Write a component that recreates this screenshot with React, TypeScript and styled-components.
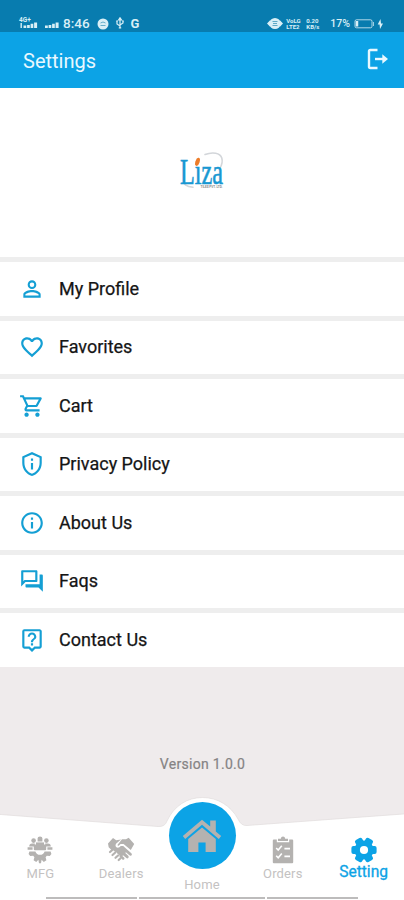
import React from "react";
import styled, { createGlobalStyle } from "styled-components";
import {
  MdPersonOutline,
  MdFavoriteBorder,
  MdOutlineShoppingCart,
  MdOutlinePrivacyTip,
  MdInfoOutline,
  MdOutlineQuestionAnswer,
  MdOutlineLiveHelp,
} from "react-icons/md";

const BLUE = "#0ca3e6";
const GREY = "#b4b2b0";

const GlobalStyle = createGlobalStyle`
  * { box-sizing: border-box; }
  body {
    margin: 0;
    background: #efebec;
    font-family: Roboto, "Liberation Sans", sans-serif;
  }
`;

const Screen = styled.div`
  width: 404px;
  height: 900px;
  overflow: hidden;
  display: flex;
  flex-direction: column;
  background: #efebec;
`;

const StatusBar = styled.div`
  height: 32px;
  flex: none;
  display: flex;
  justify-content: space-between;
  align-items: flex-start;
  padding: 15px 20px 0 18px;
  background: #087caf;
  color: #d9eff6;
`;

const StatusGroup = styled.div`
  display: flex;
  height: 17px;
  align-items: center;

  svg { flex: none; }
`;

const SignalPair = styled.div`
  display: flex;
  gap: 7px;
`;

const Notifications = styled.div`
  display: flex;
  align-items: center;
  gap: 6px;
`;

const Clock = styled.span`
  margin: 0 7px 0 3px;
  font-size: 13.5px;
  font-weight: 500;
  line-height: 17px;
`;

const StatusText = styled.span`
  margin: 0 4px 0 9px;
  font-size: 10.5px;
  font-weight: 500;
  line-height: 17px;
`;

const TinyStack = styled.span<{ $gap: number }>`
  display: flex;
  flex-direction: column;
  width: 15px;
  margin-left: ${(p) => p.$gap}px;
  font-size: 6px;
  font-weight: 700;
  line-height: 6px;
`;

const GoogleMark = styled.span`
  font-size: 13px;
  font-weight: 700;
  line-height: 17px;
`;

const Header = styled.header`
  height: 56px;
  flex: none;
  display: flex;
  align-items: center;
  justify-content: space-between;
  padding: 0 15px 0 23px;
  background: ${BLUE};
  color: #e9f8ff;

  svg { margin-bottom: 2px; }
`;

const Title = styled.h1`
  margin: 1px 0 0;
  font-size: 20px;
  font-weight: 400;
  line-height: 24px;
`;

const LogoPanel = styled.div`
  height: 169px;
  flex: none;
  display: flex;
  justify-content: center;
  padding-top: 61px;
  background: #fff;

  svg { overflow: visible; }
`;

const Menu = styled.nav`
  flex: none;
  display: flex;
  flex-direction: column;
`;

const MenuRow = styled.a`
  height: 58.5px;
  display: flex;
  align-items: center;
  gap: 14px;
  padding: 0 19px;
  border-top: 5px solid #eeeeee;
  background: #fff;
  color: #151515;
  font-size: 18px;
  line-height: 24px;

  svg {
    flex: none;
    color: #149fd4;
  }
`;

const MenuLabel = styled.span`
  -webkit-text-stroke: 0.25px currentColor;
`;

const Version = styled.p`
  margin: 88px 0 0;
  padding-left: 1px;
  text-align: center;
  color: #858384;
  font-size: 14px;
  line-height: 18px;
  letter-spacing: 0.3px;
  -webkit-text-stroke: 0.2px currentColor;
`;

const BottomBar = styled.footer`
  position: relative;
  height: 104px;
  flex: none;
  margin-top: auto;
`;

const BarShape = styled.svg`
  position: absolute;
  inset: 0;
`;

const Tabs = styled.div`
  position: relative;
  height: 104px;
  display: grid;
  grid-template-columns: repeat(5, 1fr);
`;

const Tab = styled.div<{ $kind?: "home" | "active" }>`
  display: flex;
  flex-direction: column;
  align-items: center;
  padding-top: ${(p) => (p.$kind === "home" ? 6 : 40)}px;
  color: ${(p) => (p.$kind === "active" ? BLUE : "#c4c2c2")};
  font-size: ${(p) => (p.$kind === "active" ? 15.6 : 13)}px;
  line-height: 18px;
  white-space: nowrap;

  svg { flex: none; }
`;

const TabLabel = styled.span<{ $active?: boolean }>`
  margin-top: ${(p) => (p.$active ? 0 : 1)}px;
  letter-spacing: ${(p) => (p.$active ? 0 : 0.15)}px;
  -webkit-text-stroke: ${(p) => (p.$active ? 0.3 : 0)}px currentColor;
`;

const HomeButton = styled.div`
  width: 67px;
  height: 67px;
  display: flex;
  align-items: center;
  justify-content: center;
  border-radius: 50%;
  background: ${BLUE};
  margin: 0 0 6px 1px;
`;

const GestureBar = styled.div`
  position: absolute;
  left: 46px;
  bottom: 1px;
  display: flex;
  gap: 2px;
`;

const Gesture = styled.i<{ $w: number }>`
  width: ${(p) => p.$w}px;
  height: 2px;
  background: #bdbcbc;
`;

const Bars = () => <path d="M0 9.5h2.8V12H0zM3.6 9h2.7v3H3.6zM7.1 7.8h2.7V12H7.1zM10.6 6.5h3V12h-3z" />;

const NetworkSignal = () => (
  <svg width="20" height="15" viewBox="0 0 20 15" fill="currentColor">
    <text x="1" y="5.8" fontSize="6.5" fontWeight="700">4G+</text>
    <path d="M2.5 7h1.4v5H2.5z" />
    <g transform="translate(5.5 0)"><Bars /></g>
  </svg>
);

const Signal = () => (
  <svg width="15" height="15" viewBox="0 0 15 15" fill="currentColor"><Bars /></svg>
);

const ChatDisc = () => (
  <svg width="12" height="12" viewBox="0 0 12 12">
    <circle cx="6" cy="6" r="5.5" fill="currentColor" />
    <path d="M3.5 5Q6 3 8.5 5M3.5 7.5h5" stroke="#65aeca" fill="none" />
  </svg>
);

const Usb = () => (
  <svg width="10" height="13" viewBox="0 0 10 13" fill="none" stroke="currentColor" strokeWidth="1.2">
    <path d="M5 2v9M5 9L2 7V4M5 8l3-2V4" />
    <path d="M3.5 3L5 .8 6.5 3zM3.8 10.8h2.4M1.2 4h1.6M7.2 4h1.6" />
  </svg>
);

const Vibrate = () => (
  <svg width="16" height="13" viewBox="0 0 16 13" fill="currentColor">
    <path d="M0 6.5L3.3 3v7zM16 6.5L12.7 3v7z" />
    <circle cx="8" cy="6.5" r="5.6" />
    <path d="M5.5 4.5h5M5.5 8.5h5M6 6.5h4" stroke="#5faac6" />
  </svg>
);

const Battery = () => (
  <svg width="30" height="12" viewBox="0 0 30 12" fill="none" stroke="currentColor">
    <rect x="1" y="1.8" width="17" height="8" rx="1.5" opacity=".8" />
    <path d="M3 3v5.5" strokeWidth="2.5" />
    <path d="M19.5 4v4" opacity=".7" />
    <path d="M26.5 1l-2.8 5.5h1.9L26 11l3-5.5h-2z" fill="currentColor" stroke="none" />
  </svg>
);

const Logout = () => (
  <svg width="22" height="22" viewBox="0 0 22 22" fill="none" stroke="currentColor" strokeWidth="2.4">
    <path d="M10.5 2H3.4Q2 2 2 3.4v15.2Q2 20 3.4 20h7.1" />
    <path d="M8 11h10" />
    <path d="M15.3 6.2L21 11l-5.7 4.8z" fill="currentColor" stroke="none" />
  </svg>
);

const Logo = () => (
  <svg width="52" height="44" viewBox="0 0 52 44">
    <path
      d="M29 5.5C37 2.5 44 4 45.8 9Q47.3 14 43.5 20M8 31Q7 37.5 17 38.2"
      fill="none"
      stroke="#d3d6da"
      strokeWidth="1.6"
      strokeLinecap="round"
    />
    <text
      x="4"
      y="34.5"
      fontFamily="Liberation Serif, serif"
      fontSize="35"
      fill="#1998d2"
      stroke="#1998d2"
      strokeWidth=".6"
      textLength="43"
      lengthAdjust="spacingAndGlyphs"
    >
      Lıza
    </text>
    <ellipse cx="21.5" cy="12.8" rx="2.1" ry="4.2" transform="rotate(18 21.5 12.8)" fill="#ed7c28" />
    <text x="24.5" y="39" fontSize="3.8" fontWeight="700" fill="#888" textLength="22" lengthAdjust="spacingAndGlyphs">
      TILES PVT. LTD.
    </text>
  </svg>
);

const MfgIcon = () => (
  <svg width="26" height="28" viewBox="0 0 26 28" fill={GREY}>
    <path d="M10.6 2.2q0-1.6 2.4-1.6t2.4 1.6v3.2h-4.8z" />
    <circle cx="6.6" cy="4.6" r="2.3" />
    <circle cx="19.4" cy="4.6" r="2.3" />
    <path d="M2.2 10.4q0-3 3-3h2.6v3zM18.2 7.4h2.6q3 0 3 3h-5.6z" />
    <path d="M9 6.4h8v3H9z" />
    <rect x="6.8" y="8.6" width="12.4" height="5.6" rx="1" />
    <path d="M.6 11.2h5v2.6h-5zM20.4 11.2h5v2.6h-5z" />
    <path d="M2.4 15.4h6q1.2 3.4 4.6 3.4t4.6-3.4h6l.8 2.6-1.6 2-3-.2-1.2 1.4.8 3-2.6 1.8-2.2-2.2-.6 3.4h-2l-.6-3.4-2.2 2.2-2.6-1.8.8-3-1.2-1.4-3 .2-1.6-2z" />
  </svg>
);

const HandsIcon = () => (
  <svg width="28" height="28" viewBox="0 0 28 28" fill={GREY}>
    <path d="M1 7.5L6 2l3.2 2.2L14 3.4l-5 4.4q-1.3 2.8 1 3.8 2.2.5 3.8-1.7h2.4l8.4 7.6q.9 1.4-.5 2.2-1 .5-2-.6l-3.2-2.8-.6.8 3.2 3q.8 1.6-.6 2.2-.9.4-1.8-.5l-3-2.6-.7.8 2.1 2q.4 1.8-1.5 1.9l-3.3-3q.2-2.2-2-2.8-.6-2.2-2.7-2.4-1.2-2-3.3-1.4l-3-3z" />
    <path d="M15 3.2h4L21.7 1.8 27.2 8l-3.4 6-7.2-6h-3l-2 1.7q-1.1.6-1-.9z" />
    <path d="M3 16l2-1.8M5.5 19l2.8-2.5M8.5 21.8l2.6-2.3M11.7 24l1.8-1.7" stroke={GREY} strokeWidth="2.2" strokeLinecap="round" />
  </svg>
);

const OrdersIcon = () => (
  <svg width="22" height="28" viewBox="0 0 22 28">
    <path d="M1.8 3.4h3v2.8h12.4V3.4h3q1 0 1 1v21.8q0 1-1 1H1.8q-1 0-1-1V4.4q0-1 1-1z" fill={GREY} />
    <path d="M6 5V2.8h2.8Q9 .4 11 .4t2.2 2.4H16V5z" fill={GREY} />
    <path d="M4.2 12l2 2 3.6-4.2M4.2 19.8l2 2 3.6-4.2M12.4 12.6h5.6M12.4 20.4h5.6" fill="none" stroke="#fff" strokeWidth="1.6" />
  </svg>
);

const HomeIcon = () => (
  <svg width="40" height="34" viewBox="0 0 40 34" fill={GREY}>
    <path d="M20 .8L.8 17l2.4 3L20 5.8 36.8 20l2.4-3-5.4-4.6V1.6h-5.6v6z" />
    <path d="M20 8.4L6.2 20v13h10.2v-9.6h7.2V33h10.2V20z" />
  </svg>
);

const GearIcon = () => (
  <svg width="28" height="27" viewBox="-14 -14 28 27" fill={BLUE}>
    <circle r="9.6" />
    {[0, 60, 120].map((angle) => (
      <rect key={angle} x="-12.6" y="-4" width="25.2" height="8" rx="2" transform={`rotate(${angle})`} />
    ))}
    <circle r="4.1" fill="#fff" />
  </svg>
);

const items = [
  { label: "My Profile", Icon: MdPersonOutline },
  { label: "Favorites", Icon: MdFavoriteBorder },
  { label: "Cart", Icon: MdOutlineShoppingCart },
  { label: "Privacy Policy", Icon: MdOutlinePrivacyTip },
  { label: "About Us", Icon: MdInfoOutline },
  { label: "Faqs", Icon: MdOutlineQuestionAnswer },
  { label: "Contact Us", Icon: MdOutlineLiveHelp },
];

export default function App() {
  return (
    <>
      <GlobalStyle />
      <Screen>
        <StatusBar>
          <StatusGroup>
            <SignalPair>
              <NetworkSignal />
              <Signal />
            </SignalPair>
            <Clock>8:46</Clock>
            <Notifications>
              <ChatDisc />
              <Usb />
              <GoogleMark>G</GoogleMark>
            </Notifications>
          </StatusGroup>
          <StatusGroup>
            <Vibrate />
            <TinyStack $gap={3}><span>VoLG</span><span>LTE2</span></TinyStack>
            <TinyStack $gap={5}><span>0.20</span><span>KB/s</span></TinyStack>
            <StatusText>17%</StatusText>
            <Battery />
          </StatusGroup>
        </StatusBar>
        <Header>
          <Title>Settings</Title>
          <Logout />
        </Header>
        <LogoPanel><Logo /></LogoPanel>
        <Menu>
          {items.map(({ label, Icon }) => (
            <MenuRow key={label}>
              <Icon size={26} />
              <MenuLabel>{label}</MenuLabel>
            </MenuRow>
          ))}
        </Menu>
        <Version>Version 1.0.0</Version>
        <BottomBar>
          <BarShape width="404" height="104" viewBox="0 0 404 104">
            <path
              d="M-2 18.3L158 30.5Q165 31 167 25C174 10 187 1.5 202.5 1.5S231 10 238 23Q241 30 247 29.5L406 17.8V106H-2z"
              fill="#fff"
              stroke="#e1dddd"
              strokeWidth=".7"
            />
          </BarShape>
          <Tabs>
            <Tab><MfgIcon /><TabLabel>MFG</TabLabel></Tab>
            <Tab><HandsIcon /><TabLabel>Dealers</TabLabel></Tab>
            <Tab $kind="home">
              <HomeButton><HomeIcon /></HomeButton>
              <TabLabel>Home</TabLabel>
            </Tab>
            <Tab><OrdersIcon /><TabLabel>Orders</TabLabel></Tab>
            <Tab $kind="active"><GearIcon /><TabLabel $active>Setting</TabLabel></Tab>
          </Tabs>
          <GestureBar><Gesture $w={91} /><Gesture $w={126} /><Gesture $w={91} /></GestureBar>
        </BottomBar>
      </Screen>
    </>
  );
}
